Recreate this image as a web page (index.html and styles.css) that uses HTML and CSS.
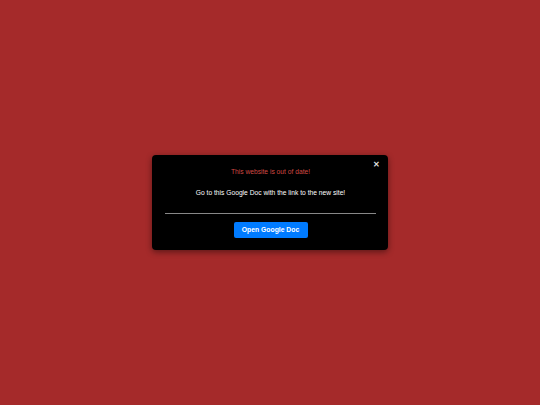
FILE: index.html
```html
<!DOCTYPE html>
<html>
<head>
<meta charset="utf-8">
<link rel="stylesheet" href="styles.css">
</head>
<body>
<div class="overlay">
  <div class="modal">
    <span class="close">&#x2715;</span>
    <p class="title">This website is out of date!</p>
    <p class="text">Go to this Google Doc with the link to the new site!</p>
    <hr class="rule">
    <div class="actions"><a class="btn">Open Google Doc</a></div>
  </div>
</div>
</body>
</html>
```
FILE: styles.css
```css
html, body {
  margin: 0;
  padding: 0;
  height: 100%;
}
body {
  background: #a52a2a;
  font-family: "Liberation Sans", Arial, sans-serif;
}
.overlay {
  height: 405px;
  display: flex;
  align-items: center;
  justify-content: center;
}
.modal {
  position: relative;
  width: 236px;
  box-sizing: border-box;
  padding: 12px 12px 12px 13px;
  background: #000;
  border-radius: 4px;
  box-shadow: 0 2px 6px rgba(0,0,0,0.45);
  text-align: center;
}
.close {
  position: absolute;
  top: 5px;
  right: 8px;
  color: #ddd;
  font-size: 8px;
  line-height: 10px;
  font-weight: bold;
}
.title {
  margin: 0;
  color: #d24a43;
  font-size: 6.7px;
  line-height: 10px;
}
.text {
  margin: 11px 0 0;
  color: #fff;
  font-size: 6.7px;
  line-height: 10px;
}
.rule {
  margin: 15px 0 0;
  border: 0;
  border-top: 1px solid #888;
}
.actions {
  margin-top: 8px;
  display: flex;
  justify-content: center;
}
.btn {
  display: block;
  width: 74px;
  background: #007bff;
  color: #fff;
  font-size: 6.8px;
  font-weight: bold;
  line-height: 16px;
  border-radius: 2px;
}
```
